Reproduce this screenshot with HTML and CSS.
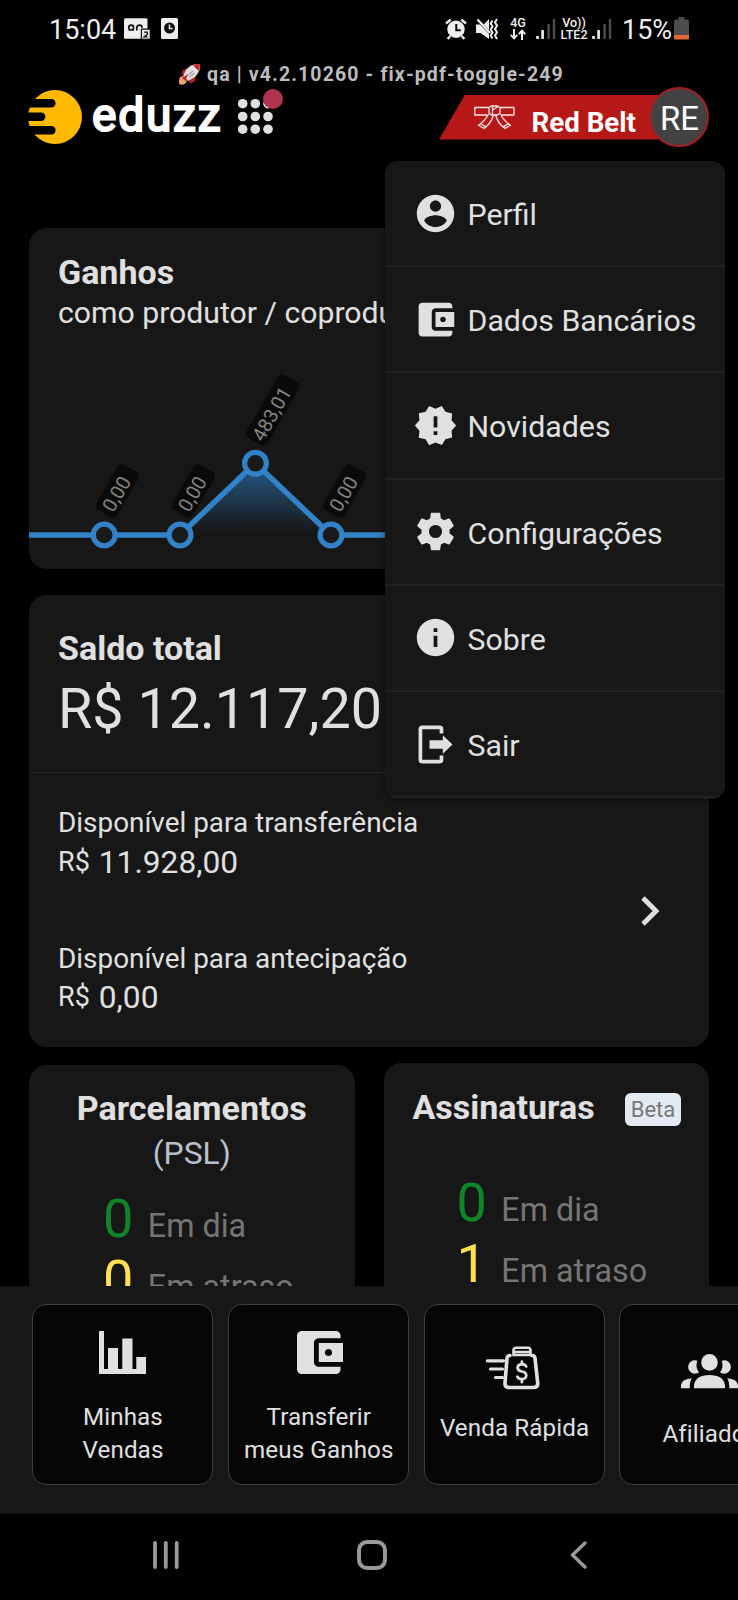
FILE: index.html
```html
<!DOCTYPE html>
<html lang="pt-BR">
<head>
<meta charset="utf-8">
<title>eduzz</title>
<link rel="stylesheet" href="styles.css">
</head>
<body>
<div class="phone">
  <div class="status">
    <span class="clock">15:04</span>
    <svg class="st-mail" width="26" height="22" viewBox="0 0 26 22"><rect width="23.500" height="20.500" y=".3" rx="1.500" fill="#eee"/><path d="M4.500 12H10M7.200 7.200q-2.400 0-2.400 2.400T7.200 12t2.400-2.400-2.400-2.400M12.800 12.500V9.700q0-2.500 2.600-2.500t2.600 2.500" fill="none" stroke="#111" stroke-width="1.700"/><rect x="16.800" y="10.500" width="9.500" height="12" fill="#111"/><rect x="18" y="11.800" width="7.700" height="8.800" fill="#eee"/><path d="M20 14.200h3.400v2l-3.300 2.600h3.600" fill="none" stroke="#111" stroke-width="1.300"/></svg>
    <svg class="st-card" width="17" height="22" viewBox="0 0 17 22"><rect width="17" height="21" rx="1.500" fill="#eee"/><circle cx="8.500" cy="10" r="5.500" fill="#111"/><path d="M8.500 6.500V10.500H11.500" stroke="#eee" stroke-width="1.500" fill="none"/></svg>
    <span class="spacer"></span>
    <svg class="st-alarm" width="22" height="22" viewBox="0 0 22 22"><circle cx="11" cy="11.200" r="8.700" fill="#eee"/><path d="M1 5.500 5.700 1.600M21 5.500 16.300 1.600M5.300 18 2.600 21M16.700 18l2.700 3" stroke="#eee" stroke-width="2.400"/><path d="M11.300 6v6.300h4.500" stroke="#000" stroke-width="2" fill="none"/></svg>
    <svg class="st-mute" width="23" height="22" viewBox="0 0 23 22"><path d="M0 6.500h4l9 9.500v5L4.500 15H0zM7.500 6.500 13 1v11z" fill="#eee"/><path d="M1.500 1.500 14 15" stroke="#eee" stroke-width="2.200"/><path d="M16.500 2.500l-1.800 3 1.800 3-1.800 3 1.800 3-1.800 3 1.800 3M21 1l-2 3.300L21 7.700l-2 3.300 2 3.300-2 3.300L21 21" stroke="#eee" stroke-width="2" fill="none"/></svg>
    <div class="net net-4g"><span>4G</span><svg width="16" height="11" viewBox="0 0 16 11"><path d="M4 0v9M.8 5.800 4 9.300l3.200-3.500M12 11V2M8.800 5.200 12 1.700l3.200 3.500" stroke="#eee" stroke-width="2" fill="none"/></svg></div>
    <svg class="st-sig1" width="20" height="22" viewBox="0 0 20 22"><path d="M1.500 18v3M6.600 12v9" stroke="#eee" stroke-width="2.600"/><path d="M12.600 6v15M18 1v20" stroke="#4c4c4c" stroke-width="2.400"/></svg>
    <div class="net net-lte"><span>Vo))</span><span>LTE2</span></div>
    <svg class="st-sig2" width="20" height="22" viewBox="0 0 20 22"><path d="M1.500 18v3M6.600 12v9" stroke="#eee" stroke-width="2.600"/><path d="M12.600 6v15M18 1v20" stroke="#4c4c4c" stroke-width="2.400"/></svg>
    <span class="pct">15%</span>
    <svg class="st-bat" width="15" height="23" viewBox="0 0 15 23"><path d="M4.500 0h6v2.500H13q2 0 2 2V18H0V4.500q0-2 2-2h2.500z" fill="#4c4c4c"/><path d="M0 18h15v3.500q0 1-1 1H1q-1 0-1-1z" fill="#e4673a"/></svg>
  </div>

  <div class="version">
    <svg width="23" height="23" viewBox="0 0 23 23"><path d="M2 14q-2 6 0 7.500Q6 23 9 18L5 13z" fill="#f0a469"/><path d="M10 5 5 7l-2 5 4-1zM18 12l-1 6-5 3-1-4z" fill="#b3222a"/><path d="M22 1Q13 0 8 7l-3 6 5 5 6-3.500Q23 9 22 1z" fill="#e6e2e4"/><path d="M22 1q-4-.2-7 1.300L20.500 8Q22.200 5 22 1z" fill="#cf2030"/><path d="m4 15 6-4-2.500 7z" fill="#cf2030"/><path d="m10 12 5-4M11.500 14l5-4" stroke="#9a9aa0" stroke-width="1.200"/></svg>
    <span>qa | v4.2.10260 - fix-pdf-toggle-249</span>
  </div>

  <header class="brand">
    <svg class="mark" width="54" height="54" viewBox="0 0 54 54"><circle cx="27" cy="27" r="27" fill="#ffb900"/><path d="M0 9.100H23.400a4.200 4.200 0 0 1 0 8.400H0zM0 22.600H13.200a4.200 4.200 0 0 1 0 8.400H0zM0 36.100H23.400a4.200 4.200 0 0 1 0 8.400H0z" fill="#000"/></svg>
    <span class="wordmark">eduzz</span>
    <svg class="apps" width="48" height="60" viewBox="0 0 48 60"><g fill="#e0e0e0"><circle cx="4.700" cy="16.700" r="4.800"/><circle cx="17.300" cy="16.700" r="4.800"/><circle cx="30" cy="16.700" r="4.800"/><circle cx="4.700" cy="29.500" r="4.800"/><circle cx="17.300" cy="29.500" r="4.800"/><circle cx="30" cy="29.500" r="4.800"/><circle cx="4.700" cy="42.200" r="4.800"/><circle cx="17.300" cy="42.200" r="4.800"/><circle cx="30" cy="42.200" r="4.800"/></g><circle cx="35" cy="12" r="10" fill="#b0344f"/></svg>
    <span class="spacer"></span>
    <div class="belt">
      <svg width="41" height="25" viewBox="0 0 41 25" fill="none" stroke="#fbe6e6" stroke-width="1.300" stroke-linejoin="round"><path d="M15 2.500H.8V10H13M26 2.500h14V10H28M15 2.500 17.500 1h6L26 2.500V8l-2.500 2h-6L15 8zM18.500 1.200V10M18.500 5 24 1.500M14.500 9Q11.500 15.500 4.500 20.300l5.500 3.200Q17.500 18 19.200 10.500M26.500 9q3 6.500 10 11.300L31 23.500Q23.500 18 21.800 10.500M6.500 18.700l5.500 3.200M34.500 18.700 29 21.900"/></svg>
      <span>Red Belt</span>
    </div>
    <div class="avatar">RE</div>
  </header>

  <main class="main">
    <section class="card earnings">
      <h2>Ganhos</h2>
      <p class="sub">como produtor / coprodutor</p>
      <svg class="chart" width="680" height="236" viewBox="29 333 680 236">
        <defs><linearGradient id="area" x1="0" y1="463" x2="0" y2="535" gradientUnits="userSpaceOnUse"><stop offset="0" stop-color="#2a74b4" stop-opacity=".75"/><stop offset=".9" stop-color="#2a74b4" stop-opacity=".04"/><stop offset="1" stop-color="#2a74b4" stop-opacity="0"/></linearGradient></defs>
        <path d="M180 535 255.300 463 331 535z" fill="url(#area)"/>
        <g class="tag" transform="translate(117.500 491) rotate(-60)"><rect x="-26" y="-12" width="52" height="24" rx="5"/><text x="-3" y="7.500">0,00</text></g>
        <g class="tag" transform="translate(193.300 491) rotate(-60)"><rect x="-26" y="-12" width="52" height="24" rx="5"/><text x="-3" y="7.500">0,00</text></g>
        <g class="tag" transform="translate(272.700 410) rotate(-60)"><rect x="-36.500" y="-12" width="73" height="24" rx="5"/><text x="-4" y="8">483,01</text></g>
        <g class="tag" transform="translate(344.500 491) rotate(-60)"><rect x="-26" y="-12" width="52" height="24" rx="5"/><text x="-3" y="7.500">0,00</text></g>
        <path d="M29 535H180L255.300 463 331 535H709" fill="none" stroke="#3182c8" stroke-width="5.500"/>
        <g fill="#1a1a1a" stroke="#3182c8" stroke-width="5.200"><circle cx="104.200" cy="535" r="10.900"/><circle cx="180" cy="535" r="10.900"/><circle cx="255.500" cy="463.300" r="10.900"/><circle cx="331" cy="535" r="10.900"/></g>
      </svg>
    </section>

    <section class="card balance">
      <div class="total">
        <h2>Saldo total</h2>
        <p class="amount">R$ 12.117,20</p>
      </div>
      <div class="avail">
        <div class="avail-list">
          <div><p class="label">Disponível para transferência</p><p class="money"><span class="cur">R$</span><span>11.928,00</span></p></div>
          <div><p class="label">Disponível para antecipação</p><p class="money"><span class="cur">R$</span><span>0,00</span></p></div>
        </div>
        <svg class="chev" width="18" height="30" viewBox="0 0 18 30"><path d="M2 2 15 15 2 28" fill="none" stroke="#e0e0e0" stroke-width="4.800"/></svg>
      </div>
    </section>

    <div class="pair">
      <section class="card mini psl">
        <h2>Parcelamentos</h2>
        <p class="kind">(PSL)</p>
        <div class="rows">
          <div class="row"><b class="ok">0</b><span>Em dia</span></div>
          <div class="row"><b class="late">0</b><span>Em atraso</span></div>
        </div>
      </section>
      <section class="card mini subs">
        <div class="head"><h2>Assinaturas</h2><span class="beta">Beta</span></div>
        <div class="rows">
          <div class="row"><b class="ok">0</b><span>Em dia</span></div>
          <div class="row"><b class="late">1</b><span>Em atraso</span></div>
        </div>
      </section>
    </div>
  </main>

  <div class="dock">
    <div class="tile t1"><svg width="47" height="43" viewBox="0 0 47 43"><path d="M0 0h5v38h4V17h10v21h4.300V7.500H33.500V38h3.800V26H47v17H0z"/></svg><span>Minhas<br>Vendas</span></div>
    <div class="tile t2"><svg width="46" height="43" viewBox="3 3 19 18" preserveAspectRatio="none"><path d="M21 18v1c0 1.100-.9 2-2 2H5c-1.110 0-2-.9-2-2V5c0-1.100.89-2 2-2h14c1.100 0 2 .9 2 2v1h-9c-1.110 0-2 .9-2 2v8c0 1.100.89 2 2 2h9zm-9-2h10V8H12v8zm4-2.500c-.83 0-1.500-.67-1.500-1.500s.67-1.500 1.500-1.500 1.500.67 1.500 1.500-.67 1.500-1.500 1.500z"/></svg><span>Transferir<br>meus Ganhos</span></div>
    <div class="tile t3"><svg class="stroke" width="54" height="44" viewBox="0 0 54 44"><path d="M1.500 14.800h16M4.500 23h12M9.500 31.500h7" stroke-width="3.200"/><path d="M24 9.500q-2.500 0-3 2.500L19 37q-.3 4 3.500 4.500h25.500q4-.4 3.700-4.500L49 12q-.5-2.700-3-2.500" stroke-width="3.600"/><path d="M27.500 9V4q.2-2.200 2.500-2.300h12q2.300.1 2.500 2.300v5zM27.500 6h17" stroke-width="2.600"/><path d="M40.200 20.500q-1.200-2.300-4.400-2.300-4 .2-4.200 3.600.2 3 4.300 3.700 4.300.6 4.400 4-.3 3.500-4.400 3.600-3.400 0-4.600-2.500M35.900 15.600v2.800M35.900 33.200v3" stroke-width="2.700"/></svg><span>Venda Rápida</span></div>
    <div class="tile t4"><svg width="57" height="35" viewBox="0 0 57 35"><circle cx="28.500" cy="8.400" r="8.300"/><path d="M13 34.300v-3Q14.500 21 28.500 21T44 31.300v3zM0 34.300V31Q1 25 10.800 24.300 8.700 27.500 8.700 34.300zM57 34.300V31Q56 25 46.200 24.300q2.100 3.200 2.100 10z"/><path d="M16.300 6.700a6.700 6.700 0 1 0 1.700 11.500Q14 13 16.300 6.700zM40.700 6.700a6.700 6.700 0 1 1-1.700 11.500Q43 13 40.700 6.700z"/></svg><span>Afiliados</span></div>
  </div>

  <nav class="sysnav">
    <svg width="26" height="28" viewBox="0 0 26 28"><path d="M2 2v24M12.800 2v24M23.700 2v24" stroke-width="3.800"/></svg>
    <svg class="home" width="30" height="30" viewBox="0 0 30 30"><rect x="2" y="2" width="26" height="26" rx="8" stroke-width="4"/></svg>
    <svg width="17" height="28" viewBox="0 0 17 28"><path d="M15 2 2.500 14 15 26" stroke-width="3.400"/></svg>
  </nav>

  <div class="menu">
    <div class="item"><svg width="45" height="45" viewBox="0 0 24 24"><path d="M12 2C6.480 2 2 6.480 2 12s4.480 10 10 10 10-4.480 10-10S17.520 2 12 2zm0 3c1.660 0 3 1.340 3 3s-1.340 3-3 3-3-1.340-3-3 1.340-3 3-3zm0 14.200c-2.500 0-4.710-1.280-6-3.220.03-1.990 4-3.080 6-3.080 1.990 0 5.970 1.090 6 3.080-1.290 1.940-3.500 3.220-6 3.220z"/></svg><span>Perfil</span></div>
    <div class="item"><svg width="45" height="45" viewBox="0 0 24 24"><path d="M21 18v1c0 1.100-.9 2-2 2H5c-1.110 0-2-.9-2-2V5c0-1.100.89-2 2-2h14c1.100 0 2 .9 2 2v1h-9c-1.110 0-2 .9-2 2v8c0 1.100.89 2 2 2h9zm-9-2h10V8H12v8zm4-2.500c-.83 0-1.500-.67-1.500-1.500s.67-1.500 1.500-1.500 1.500.67 1.500 1.500-.67 1.500-1.500 1.500z"/></svg><span>Dados Bancários</span></div>
    <div class="item"><svg width="45" height="45" viewBox="0 0 24 24"><path d="M23 12l-2.440-2.780.34-3.680-3.610-.82-1.890-3.180L12 3 8.600 1.540 6.710 4.720l-3.610.81.34 3.680L1 12l2.440 2.780-.34 3.690 3.610.82 1.890 3.180L12 21l3.400 1.460 1.890-3.180 3.610-.82-.34-3.680L23 12zm-10 5h-2v-2h2v2zm0-4h-2V7h2v6z"/></svg><span>Novidades</span></div>
    <div class="item"><svg width="45" height="45" viewBox="0 0 24 24"><path d="M12,15.500A3.500,3.500 0 0,1 8.500,12A3.500,3.500 0 0,1 12,8.500A3.500,3.500 0 0,1 15.500,12A3.500,3.500 0 0,1 12,15.500M19.430,12.970C19.470,12.650 19.500,12.330 19.500,12C19.500,11.670 19.470,11.340 19.430,11L21.540,9.370C21.730,9.220 21.780,8.950 21.660,8.730L19.660,5.270C19.540,5.050 19.270,4.960 19.050,5.050L16.560,6.050C16.040,5.660 15.500,5.320 14.870,5.070L14.500,2.420C14.460,2.180 14.250,2 14,2H10C9.750,2 9.540,2.180 9.500,2.420L9.130,5.070C8.500,5.320 7.960,5.660 7.440,6.050L4.950,5.050C4.730,4.960 4.460,5.050 4.340,5.270L2.340,8.730C2.210,8.950 2.270,9.220 2.460,9.370L4.570,11C4.530,11.340 4.500,11.670 4.500,12C4.500,12.330 4.530,12.650 4.570,12.970L2.460,14.630C2.270,14.780 2.210,15.050 2.340,15.270L4.340,18.730C4.460,18.950 4.730,19.030 4.950,18.950L7.440,17.940C7.960,18.340 8.500,18.680 9.130,18.930L9.500,21.580C9.540,21.820 9.750,22 10,22H14C14.250,22 14.460,21.820 14.500,21.580L14.870,18.930C15.500,18.670 16.040,18.340 16.560,17.940L19.050,18.950C19.270,19.030 19.540,18.950 19.660,18.730L21.660,15.270C21.780,15.050 21.730,14.780 21.540,14.630L19.430,12.970Z"/></svg><span>Configurações</span></div>
    <div class="item"><svg width="45" height="45" viewBox="0 0 24 24"><path d="M12 2C6.480 2 2 6.480 2 12s4.480 10 10 10 10-4.480 10-10S17.520 2 12 2zm1 15h-2v-6h2v6zm0-8h-2V7h2v2z"/></svg><span>Sobre</span></div>
    <div class="item"><svg width="45" height="45" viewBox="0 0 45 45"><path d="M28.500 11.500V7.300q0-1.900-1.900-1.900H9.300q-1.900 0-1.900 1.900V37.700q0 1.900 1.900 1.900H26.600q1.900 0 1.900-1.900V33.500" fill="none" stroke="#e0e0e0" stroke-width="3.700"/><path d="M16.500 18.300H29.800V13.300L39.500 22.500 29.800 31.700V26.700H16.500z"/></svg><span>Sair</span></div>
  </div>
</div>
</body>
</html>
```
FILE: styles.css
```css
* { box-sizing: border-box; }
body { margin: 0; background: #000; font-family: Roboto, "Liberation Sans", sans-serif; color: #e0e0e0; }
h2, p { margin: 0; }
svg { display: block; flex: none; }
.phone { position: relative; width: 738px; height: 1600px; overflow: hidden; display: flex; flex-direction: column; background: #000; }
.spacer { flex: 1; }

.status { height: 57px; padding: 0 49px 0 49px; display: flex; align-items: center; color: #eee; }
.clock, .pct { font-size: 27px; line-height: 30px; padding-top: 3px; white-space: nowrap; }
.clock { width: 66px; }
.st-mail { margin-left: 9px; }
.st-card { margin-left: 11px; }
.st-mute { margin-left: 9px; }
.net { display: flex; flex-direction: column; align-items: center; font-size: 12.500px; font-weight: 500; line-height: 12px; }
.net-4g { width: 16px; margin-left: 11px; }
.st-sig1 { margin-left: 10px; }
.net-lte { width: 28px; margin-left: 4px; }
.st-sig2 { margin-left: 4px; }
.pct { width: 49px; margin-left: 10px; }
.st-bat { margin-left: 3px; }

.version { height: 30px; padding: 6px 0 0 178px; display: flex; gap: 6px; font-size: 19.500px; line-height: 24px; font-weight: 700; letter-spacing: 1.140px; color: #bdbdbd; white-space: nowrap; }
.brand { height: 60px; padding: 0 29px 0 28px; display: flex; align-items: center; }
.wordmark { margin-left: 10px; width: 130px; font-size: 46px; line-height: 48px; font-weight: 400; color: #fff; padding-bottom: 4px; -webkit-text-stroke: 2.200px #fff; letter-spacing: 1.800px; }
.apps { margin-left: 16px; }
.belt { width: 240px; height: 45px; background: #b61818; clip-path: polygon(26px 0, 100% 0, 100% 100%, 0 100%); display: flex; align-items: center; padding-left: 35px; gap: 16.500px; }
.belt span { font-size: 27.700px; line-height: 30px; font-weight: 700; color: #fff; padding-top: 11px; white-space: nowrap; }
.avatar { width: 60px; height: 60px; margin-left: -30px; padding: 3px 0 0 1px; border-radius: 50%; background: #424242; border: 2px solid #a02025; color: #fff; font-size: 33px; flex: none; display: flex; align-items: center; justify-content: center; position: relative; }

.main { height: 1139px; padding: 81px 29px 0; overflow: hidden; flex: none; }
.card { background: #171717; border-radius: 18px; overflow: hidden; }
h2 { font-size: 34px; line-height: 38px; padding-bottom: 2px; font-weight: 700; white-space: nowrap; }
.earnings { height: 341px; padding-top: 25px; margin-bottom: 26px; }
.earnings h2, .earnings .sub { padding-left: 29px; }
.sub { font-size: 30.200px; line-height: 40px; white-space: nowrap; }
.tag rect { fill: #0a0a0a; }
.tag text { fill: #858585; font-size: 19.500px; text-anchor: middle; }

.balance { height: 452px; margin-bottom: 16px; }
.total { height: 178px; padding: 34px 29px 0; border-bottom: 1px solid #242424; }
.amount { margin-top: 8px; font-size: 55.700px; line-height: 64px; white-space: nowrap; }
.avail { display: flex; justify-content: space-between; padding: 32px 50px 0 29px; }
.avail-list { display: flex; flex-direction: column; gap: 58px; }
.label { font-size: 27.900px; line-height: 36px; white-space: nowrap; }
.money { display: flex; gap: 9px; margin-top: 1.500px; font-size: 31.700px; line-height: 40px; white-space: nowrap; }
.cur { font-size: 27px; margin-top: -1px; }
.chev { margin-top: 91px; }

.pair { display: flex; gap: 29px; align-items: flex-start; }
.mini { width: 325.500px; height: 300px; flex: none; }
.psl { margin-top: 2px; padding-top: 24px; text-align: center; }
.kind { font-size: 31.800px; line-height: 42px; margin-top: 3px; color: #b9c0cb; }
.psl .rows { padding: 14px 0 0 74px; }
.subs .rows { padding: 44px 0 0 73px; }
.head { display: flex; justify-content: space-between; padding: 25px 28px 0 29px; }
.beta { align-self: flex-start; margin-top: 5px; width: 56px; height: 33px; border-radius: 6px; background: #e4eaf1; color: #777; font-size: 22px; line-height: 34px; text-align: center; }
.row { display: flex; align-items: baseline; gap: 14.500px; height: 61px; line-height: 61px; font-size: 32.300px; color: #757575; white-space: nowrap; }
.row b { font-weight: 400; font-size: 54px; }
.row .ok { color: #0f8527; }
.row .late { color: #ffe04f; }

.dock { height: 228px; flex: none; background: #171717; padding: 18px 0 0 32px; display: flex; gap: 14.800px; overflow: hidden; }
.tile { width: 181px; height: 181px; flex: none; border: 1px solid #3e3e3e; border-radius: 14px; background: #060606; display: flex; flex-direction: column; align-items: center; text-align: center; font-size: 24.200px; line-height: 33px; letter-spacing: .1px; white-space: nowrap; }
.tile span { padding-left: 1px; }
.tile svg, .item svg { fill: #e0e0e0; }
.tile .stroke { fill: none; stroke: #e0e0e0; stroke-linecap: round; }
.t1, .t2 { padding-top: 26px; }
.t1 span, .t2 span { margin-top: 27px; }
.t2 svg { margin-left: 3px; }
.t3 { padding-top: 41px; }
.t3 svg { margin-right: 2px; }
.t3 span { margin-top: 22px; }
.t4 { padding-top: 49px; }
.t4 span { margin-top: 29px; }

.sysnav { height: 86px; flex: none; display: flex; justify-content: space-between; align-items: center; padding: 0 151px 4px 153px; }
.sysnav svg { fill: none; stroke: #999; stroke-linecap: round; stroke-linejoin: round; }
.sysnav .home { margin-right: 5px; }

.menu { position: absolute; left: 385px; top: 161px; width: 340px; height: 638px; background: #171717; border-radius: 13px; overflow: hidden; box-shadow: 0 1px 6px rgba(0,0,0,.45); }
.item { height: 106.200px; padding: 0 0 0 28px; display: flex; align-items: center; gap: 9.500px; border-bottom: 2px solid #212121; font-size: 30.300px; line-height: 36px; white-space: nowrap; }
.item span { padding-top: 4px; }
```
